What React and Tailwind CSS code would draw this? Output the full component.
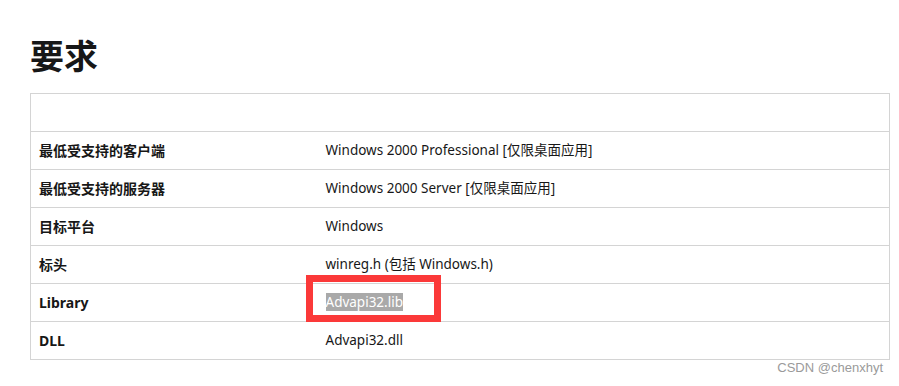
import React from "react";

const rows = [
  { label: "最低受支持的客户端", value: "Windows 2000 Professional [仅限桌面应用]" },
  { label: "最低受支持的服务器", value: "Windows 2000 Server [仅限桌面应用]" },
  { label: "目标平台", value: "Windows" },
  { label: "标头", value: "winreg.h (包括 Windows.h)" },
  { label: "Library", value: "Advapi32.lib", marked: true },
  { label: "DLL", value: "Advapi32.dll" },
];

const App = () => {
  return (
    <div className="relative w-[899px] h-[386px] bg-white pl-[30px] pt-[35px] font-['Noto_Sans','Noto_Sans_CJK_SC',sans-serif] text-[#171717]">
      <h1 className="text-[34px] font-bold leading-[42px]">要求</h1>
      <table className="mt-[16px] w-[860px] border-collapse border border-[#d4d4d4] text-[13.5px]">
        <tbody>
          <tr className="h-[38px] border-b border-[#d4d4d4]">
            <td colSpan={2}></td>
          </tr>
          {rows.map((row) => (
            <tr key={row.label} className="h-[38px] border-b border-[#d4d4d4]">
              <td className="w-[287px] pl-[8px] font-bold text-[14px]">{row.label}</td>
              <td className="pl-[8px]">
                {row.marked ? (
                  <span className="relative inline-block">
                    <span className="bg-[#a9a9a9] text-white">{row.value}</span>
                    <span className="absolute left-[-20px] top-[-17px] w-[135px] h-[47px] border-[7px] border-[#fb3939]"></span>
                  </span>
                ) : (
                  row.value
                )}
              </td>
            </tr>
          ))}
        </tbody>
      </table>
      <div className="absolute right-[16px] bottom-[9px] text-[13px] text-[#9a9a9a] font-['Liberation_Sans',sans-serif]">
        CSDN @chenxhyt
      </div>
    </div>
  );
};

export default App;
